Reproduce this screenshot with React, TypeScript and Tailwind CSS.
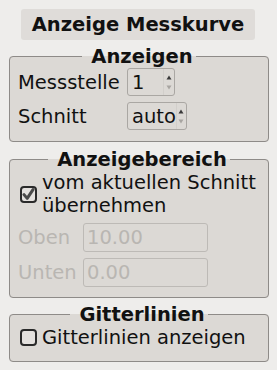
import React from 'react';

const font = { fontFamily: '"DejaVu Sans", sans-serif' };

const SpinBox = ({ value, width }: { value: string; width: string }) => (
  <div className={`${width} h-[28px] flex items-center border border-[#aaa7a3] rounded-[3px] bg-[#dcd9d5]`}>
    <span className="flex-1 pl-[4px] leading-[23px]">{value}</span>
    <div className="w-[10px] h-full flex flex-col items-center justify-center gap-[5px] border-l border-[#d2cfcb] mr-[1px]">
      <svg width="6" height="5" viewBox="0 0 6 5">
        <path d="M3 0.5 L5.5 4.5 L0.5 4.5 Z" fill="#3a3a3a" />
      </svg>
      <svg width="6" height="5" viewBox="0 0 6 5">
        <path d="M0.5 0.5 L5.5 0.5 L3 4.5 Z" fill="#a8a5a1" />
      </svg>
    </div>
  </div>
);

const CheckBox = ({ checked }: { checked: boolean }) => (
  <div className="w-[17px] h-[17px] shrink-0 rounded-[4px] border-2 border-[#2a2a2a] bg-[#e4e1de] flex items-center justify-center">
    {checked && (
      <svg width="13" height="13" viewBox="0 0 13 13">
        <path d="M2 6.6 L5.2 10.4 L11 1.6" fill="none" stroke="#4a4a4a" strokeWidth="3" strokeLinecap="round" strokeLinejoin="round" />
      </svg>
    )}
  </div>
);

const Group = ({ title, className, children }: { title: string; className?: string; children: React.ReactNode }) => (
  <fieldset className={`w-[260px] ml-[9px] border border-[#8e8b88] rounded-[4px] bg-[#dcd9d5] pl-[8px] pr-[8px] ${className ?? ''}`}>
    <legend className="mx-auto px-[6px] font-bold leading-[23px] translate-x-[3px]">{title}</legend>
    {children}
  </fieldset>
);

export default function App() {
  return (
    <div style={font} className="w-[277px] h-[370px] bg-[#eeedeb] text-[19.5px] text-[#111] overflow-hidden pt-[9px]">
      <div className="w-[234px] h-[31px] ml-[21px] bg-[#dfdcd9] rounded-[3px] flex items-center justify-center font-bold leading-[23px]">
        Anzeige Messkurve
      </div>

      <Group title="Anzeigen" className="mt-[5px] pb-[11px]">
        <div className="flex flex-col gap-[6px]">
          <div className="flex items-center">
            <span className="w-[109px] leading-[23px]">Messstelle</span>
            <SpinBox value="1" width="w-[48px]" />
          </div>
          <div className="flex items-center">
            <span className="w-[109px] leading-[23px]">Schnitt</span>
            <SpinBox value="auto" width="w-[60px]" />
          </div>
        </div>
      </Group>

      <Group title="Anzeigebereich" className="mt-[6px] pb-[10px]">
        <div className="flex items-center gap-[5px] pl-[2px]">
          <CheckBox checked />
          <span className="leading-[23px]">vom aktuellen Schnitt<br />übernehmen</span>
        </div>
        <div className="flex flex-col gap-[6px] mt-[6px] text-[#b9b6b2]">
          <div className="flex items-center">
            <span className="w-[65px] leading-[23px]">Oben</span>
            <div className="w-[125px] h-[29px] border border-[#bdbab6] rounded-[3px] pl-[3px] flex items-center leading-[23px]">10.00</div>
          </div>
          <div className="flex items-center">
            <span className="w-[65px] leading-[23px]">Unten</span>
            <div className="w-[125px] h-[29px] border border-[#bdbab6] rounded-[3px] pl-[3px] flex items-center leading-[23px]">0.00</div>
          </div>
        </div>
      </Group>

      <Group title="Gitterlinien" className="mt-[5px] pb-[12px]">
        <div className="flex items-center gap-[5px] pl-[2px]">
          <CheckBox checked={false} />
          <span className="leading-[23px]">Gitterlinien anzeigen</span>
        </div>
      </Group>
    </div>
  );
}
